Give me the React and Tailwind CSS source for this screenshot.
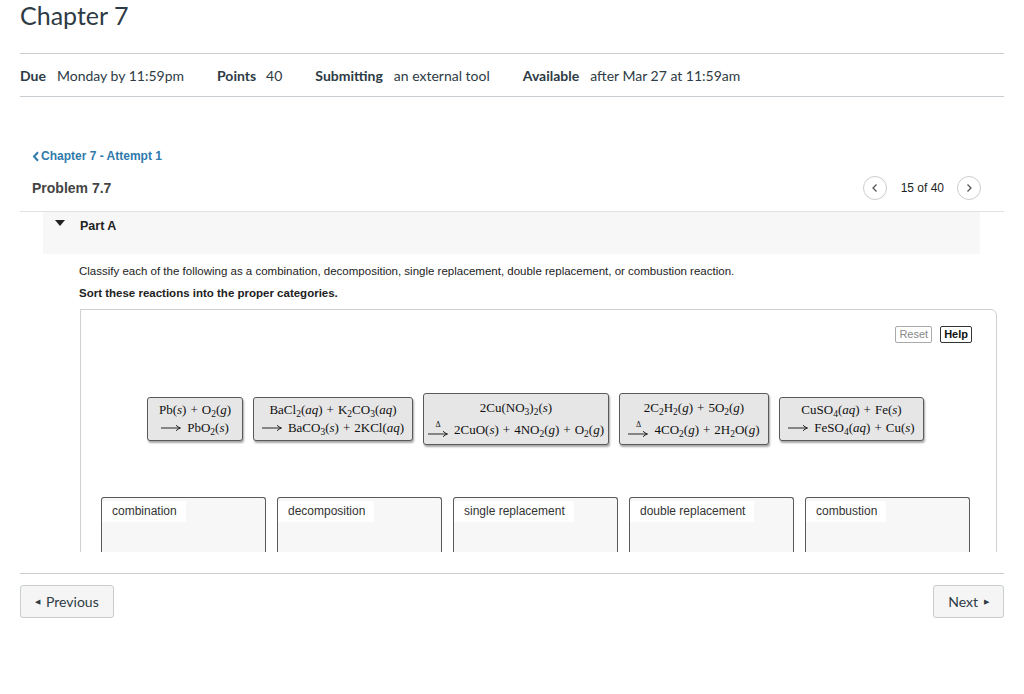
import React from "react";

const Sub = ({ children }) => (
  <span className="text-[9.5px] relative top-[3px] leading-none">{children}</span>
);
const V = ({ children }) => <i>{children}</i>;
const ArrowSvg = () => (
  <svg width="20" height="8" viewBox="0 0 20 8" className="inline-block">
    <path d="M0 4 L18.5 4" stroke="#111" strokeWidth="0.9" />
    <path d="M15 1.2 Q17 3.3 19.5 4 Q17 4.7 15 6.8" fill="none" stroke="#111" strokeWidth="0.9" />
  </svg>
);
const Arr = () => (
  <span className="inline-block mr-[6px] relative top-[-1px]">
    <ArrowSvg />
  </span>
);
const DArr = () => (
  <span className="inline-flex flex-col items-center leading-none relative top-[-2px] mr-[6px] align-middle">
    <span className="text-[8px] leading-none mb-[1px]">Δ</span>
    <ArrowSvg />
  </span>
);
const P = () => <span className="mx-[4px]">+</span>;

const Tile = ({ children, tall, w }) => (
  <div
    className={
      "rounded-[3px] border border-[#5a5a5a] bg-[#e6e6e6] shadow-[1px_2px_2px_rgba(0,0,0,0.35)] text-center text-[13px] text-[#111] whitespace-nowrap flex flex-col items-center " +
      (tall ? "py-[3px] leading-[22px] " : "py-[3px] leading-[18px] ") +
      w
    }
    style={{ fontFamily: '"Liberation Serif", "DejaVu Serif", serif' }}
  >
    {children}
  </div>
);

const Cat = ({ label }) => (
  <div className="w-[165px] h-[58px] border border-b-0 border-[#5a5a5a] rounded-t-[3px] bg-[#f7f7f7]">
    <span className="inline-block bg-white pl-[10px] pr-[9px] pt-[2px] pb-[3px] text-[12px] leading-[16px] text-[#333]">
      {label}
    </span>
  </div>
);

export default function App() {
  return (
    <div className="w-[1024px] h-[694px] bg-white overflow-hidden" style={{ fontFamily: 'Lato, "Liberation Sans", sans-serif' }}>
      <div className="px-[20px] w-[1024px]">
        <h1 className="text-[25px] leading-[30px] pb-[23px] text-[#2d3b45] font-normal">Chapter 7</h1>
        <div className="border-t border-b border-[#c7cdd1] h-[44px] flex items-center text-[14px] text-[#2d3b45]">
          <span className="font-bold">Due</span>
          <span className="ml-[11px]">Monday by 11:59pm</span>
          <span className="font-bold ml-[33px]">Points</span>
          <span className="ml-[10px]">40</span>
          <span className="font-bold ml-[33px]">Submitting</span>
          <span className="ml-[11px]">an external tool</span>
          <span className="font-bold ml-[33px]">Available</span>
          <span className="ml-[11px]">after Mar 27 at 11:59am</span>
        </div>
      </div>

      {/* external tool frame */}
      <div
        className="ml-[20px] w-[984px] h-[455px] overflow-hidden"
        style={{ fontFamily: '"Liberation Sans", Arial, sans-serif' }}
      >
        <div className="pt-[51px] pl-[12px] text-[12px] leading-[16px] font-bold text-[#2f7aad] flex items-center">
          <svg width="8" height="11" viewBox="0 0 8 11" className="mr-[1px]">
            <path d="M6 1.2 L2 5.5 L6 9.8" fill="none" stroke="#2f7aad" strokeWidth="2" />
          </svg>
          <span>Chapter 7 - Attempt 1</span>
        </div>
        <div className="flex items-center justify-between pl-[12px] pr-[23px] mt-[12px] h-[24px]">
          <span className="text-[14px] font-bold text-[#444]">Problem 7.7</span>
          <div className="flex items-center text-[12px] text-[#222]">
            <span className="w-[24px] h-[24px] rounded-full border border-[#ccc] flex items-center justify-center">
              <svg width="10" height="10" viewBox="0 0 10 10"><path d="M6.5 1.5 L3 5 L6.5 8.5" fill="none" stroke="#555" strokeWidth="1.3" /></svg>
            </span>
            <span className="ml-[14px] mr-[13px]">15 of 40</span>
            <span className="w-[24px] h-[24px] rounded-full border border-[#ccc] flex items-center justify-center">
              <svg width="10" height="10" viewBox="0 0 10 10"><path d="M3.5 1.5 L7 5 L3.5 8.5" fill="none" stroke="#555" strokeWidth="1.3" /></svg>
            </span>
          </div>
        </div>
        <div className="mt-[11px] border-t border-[#e2e2e2]" />
        <div className="ml-[23px] w-[937px] h-[42px] bg-[#f7f7f7] flex items-start pt-[5px]">
          <span className="ml-[12px] mt-[3px]">
            <svg width="10" height="7" viewBox="0 0 10 7"><path d="M0 0 L10 0 L5 6 Z" fill="#222" /></svg>
          </span>
          <span className="ml-[15px] text-[12.5px] font-bold text-[#222]">Part A</span>
        </div>
        <div className="pl-[59px] pt-[10px] text-[11.5px] leading-[14px] text-[#222]">
          <p>Classify each of the following as a combination, decomposition, single replacement, double replacement, or combustion reaction.</p>
          <p className="mt-[8px] font-bold">Sort these reactions into the proper categories.</p>
        </div>
        <div className="ml-[60px] mt-[9px] w-[917px] h-[260px] border border-[#d0d0d0] rounded-tr-[6px]">
          <div className="flex justify-end gap-[8px] pr-[24px] pt-[16px]">
            <span className="text-[11px] leading-[15px] px-[3px] border border-[#aaa] rounded-[2px] text-[#888]">Reset</span>
            <span className="text-[11px] leading-[15px] px-[3px] border border-[#333] rounded-[2px] font-bold text-[#111]">Help</span>
          </div>
          <div className="flex items-center gap-[10px] mt-[49px] h-[54px] pl-[66px]">
            <Tile w="w-[96px]">
              <div>Pb(<V>s</V>)<P />O<Sub>2</Sub>(<V>g</V>)</div>
              <div><Arr />PbO<Sub>2</Sub>(<V>s</V>)</div>
            </Tile>
            <Tile w="w-[160px]">
              <div>BaCl<Sub>2</Sub>(<V>aq</V>)<P />K<Sub>2</Sub>CO<Sub>3</Sub>(<V>aq</V>)</div>
              <div><Arr />BaCO<Sub>3</Sub>(<V>s</V>)<P />2KCl(<V>aq</V>)</div>
            </Tile>
            <Tile tall w="w-[186px]">
              <div>2Cu(NO<Sub>3</Sub>)<Sub>2</Sub>(<V>s</V>)</div>
              <div><DArr />2CuO(<V>s</V>)<P />4NO<Sub>2</Sub>(<V>g</V>)<P />O<Sub>2</Sub>(<V>g</V>)</div>
            </Tile>
            <Tile tall w="w-[150px]">
              <div>2C<Sub>2</Sub>H<Sub>2</Sub>(<V>g</V>)<P />5O<Sub>2</Sub>(<V>g</V>)</div>
              <div><DArr />4CO<Sub>2</Sub>(<V>g</V>)<P />2H<Sub>2</Sub>O(<V>g</V>)</div>
            </Tile>
            <Tile w="w-[145px]">
              <div>CuSO<Sub>4</Sub>(<V>aq</V>)<P />Fe(<V>s</V>)</div>
              <div><Arr />FeSO<Sub>4</Sub>(<V>aq</V>)<P />Cu(<V>s</V>)</div>
            </Tile>
          </div>
          <div className="flex gap-[11px] mt-[51px] pl-[20px]">
            <Cat label="combination" />
            <Cat label="decomposition" />
            <Cat label="single replacement" />
            <Cat label="double replacement" />
            <Cat label="combustion" />
          </div>
        </div>
      </div>

      <div className="px-[20px] w-[1024px]">
        <div className="mt-[21px] border-t border-[#c7cdd1] pt-[11px] flex justify-between">
          <button className="h-[33px] px-[14px] border border-[#c7cdd1] bg-[#f5f5f5] rounded-[3px] text-[14px] text-[#2d3b45] flex items-center">
            <span className="text-[7px] mr-[6px]">◀</span>Previous
          </button>
          <button className="h-[33px] px-[14px] border border-[#c7cdd1] bg-[#f5f5f5] rounded-[3px] text-[14px] text-[#2d3b45] flex items-center">
            Next<span className="text-[7px] ml-[6px]">▶</span>
          </button>
        </div>
      </div>
    </div>
  );
}
